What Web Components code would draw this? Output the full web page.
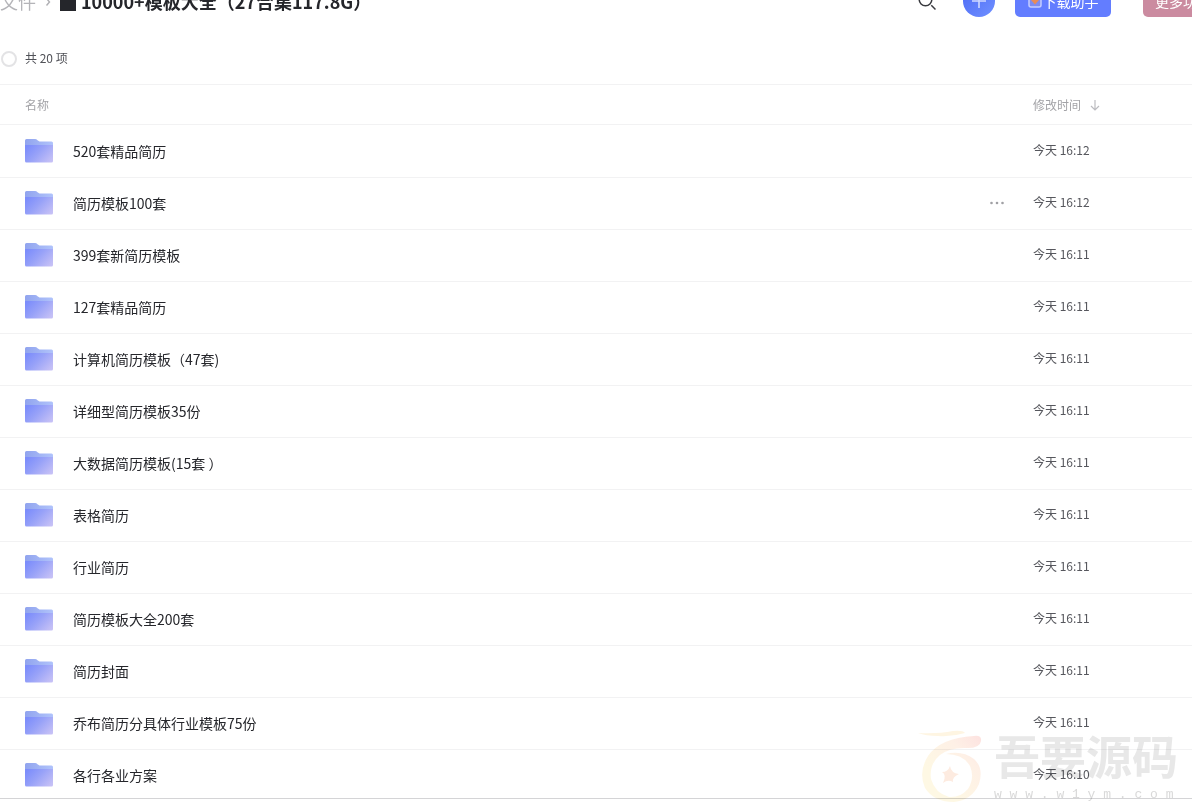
<!DOCTYPE html>
<html lang="zh-CN">
<head>
<meta charset="utf-8">
<title>文件</title>
<style>
  body {
    margin: 0;
    font-family: "Noto Sans CJK SC", sans-serif;
    color: #25262b;
    background: #fff;
  }
</style>
</head>
<body>
<drive-page>
  <drive-header slot="header">10000+模板大全（27合集117.8G）</drive-header>
  <select-bar slot="bar">共 20 项</select-bar>
  <file-table></file-table>
  <water-mark slot="mark"></water-mark>
</drive-page>

<script>
const files = [
  ['520套精品简历', '16:12'],
  ['简历模板100套', '16:12', true],
  ['399套新简历模板', '16:11'],
  ['127套精品简历', '16:11'],
  ['计算机简历模板（47套)', '16:11'],
  ['详细型简历模板35份', '16:11'],
  ['大数据简历模板(15套 ）', '16:11'],
  ['表格简历', '16:11'],
  ['行业简历', '16:11'],
  ['简历模板大全200套', '16:11'],
  ['简历封面', '16:11'],
  ['乔布简历分具体行业模板75份', '16:11'],
  ['各行各业方案', '16:10']
];

class DrivePage extends HTMLElement {
  constructor() {
    super();
    this.attachShadow({mode: 'open'}).innerHTML = `
      <style>
        :host {
          display: flex;
          flex-direction: column;
          height: 100vh;
          overflow: hidden;
          position: relative;
        }
        main {
          flex: 1;
          min-height: 0;
          overflow: hidden;
          border-top: 1px solid #f2f2f3;
          border-bottom: 1px solid #d4d4d6;
          margin-bottom: 11px;
        }
      </style>
      <slot name="header"></slot>
      <slot name="bar"></slot>
      <main><slot></slot></main>
      <slot name="mark"></slot>
    `;
  }
}

// Top bar, scrolled halfway out of the window
class DriveHeader extends HTMLElement {
  constructor() {
    super();
    this.attachShadow({mode: 'open'}).innerHTML = `
      <style>
        :host {
          display: flex;
          align-items: center;
          justify-content: space-between;
          height: 32px;
          margin-top: -15px;
          margin-right: -47px;
        }
        nav, .tools {
          display: flex;
          align-items: center;
          flex: none;
        }
        nav {
          font-size: 18px;
          line-height: 32px;
        }
        a {
          color: #b4b4b8;
          text-decoration: none;
        }
        nav svg { margin: 0 8px; }
        .block {
          width: 16px;
          height: 20px;
          background: #25262b;
          margin-right: 5px;
        }
        h1 {
          margin: 0;
          font-size: 18px;
          font-weight: 700;
        }
        button {
          border: 0;
          padding: 0;
          background: none;
          font: inherit;
          display: flex;
          align-items: center;
          justify-content: center;
        }
        .add {
          width: 32px;
          height: 32px;
          border-radius: 50%;
          background: linear-gradient(135deg, #4b69f5, #7090ff);
          margin: 0 20px 0 26px;
        }
        .main, .more {
          width: 96px;
          height: 32px;
          border-radius: 5px;
          color: #fff;
          font-size: 14px;
        }
        .main {
          background: #637dff;
          margin-right: 32px;
        }
        .main svg { margin-right: 1px; }
        .more {
          background: #cb8ba0;
          justify-content: flex-start;
          padding-left: 12px;
        }
      </style>
      <nav>
        <a href="#">文件</a>
        <svg width="8" height="10" viewBox="0 0 8 10" fill="none" stroke="#b0b0b4" stroke-width="1.4"><path d="M2.500 2.500l3 3.500-3 3.500"/></svg>
        <span class="block"></span>
        <h1><slot></slot></h1>
      </nav>
      <div class="tools">
        <button aria-label="搜索">
          <svg width="20" height="20" viewBox="0 0 20 20" fill="none" stroke="#38393e" stroke-width="1.5"><circle cx="8.500" cy="8.500" r="6.300"/><path d="M14.300 14.300l4.200 4.200"/></svg>
        </button>
        <button class="add" aria-label="新建">
          <svg width="16" height="16" viewBox="0 0 16 16" stroke="#cfd9ff" stroke-width="1.600"><path d="M8 1v14M1 8h14"/></svg>
        </button>
        <button class="main">
          <svg width="14" height="14" viewBox="0 0 14 14"><rect x="1" y="1" width="12" height="12" rx="2" fill="#7d8cf0" stroke="#c5cdff" stroke-width="1.500"/><path d="M5.500 2.500h3V6H11l-4 4.500L3 6h2.500z" fill="#e98b55"/></svg>
          下载助手
        </button>
        <button class="more">更多功能</button>
      </div>
    `;
  }
}

class SelectBar extends HTMLElement {
  constructor() {
    super();
    this.attachShadow({mode: 'open'}).innerHTML = `
      <style>
        :host { display: block; padding: 32px 0 15px 1px; }
        label {
          display: flex;
          align-items: center;
          gap: 8px;
          height: 20px;
          font-size: 12px;
          color: #505157;
        }
        input {
          appearance: none;
          box-sizing: border-box;
          width: 16px;
          height: 16px;
          margin: 0;
          border: 2px solid #e3e3e5;
          border-radius: 50%;
        }
        span { padding-bottom: 4px; }
      </style>
      <label><input type="checkbox"><span><slot></slot></span></label>
    `;
  }
}

class FolderIcon extends HTMLElement {
  constructor() {
    super();
    this.attachShadow({mode: 'open'}).innerHTML = `
      <style>
        :host { display: block; width: 28px; height: 24px; }
        svg { display: block; }
      </style>
      <svg width="28" height="24" viewBox="0 0 28 24">
        <defs>
          <linearGradient id="front" x1="0" y1="0.200" x2="1" y2="0.800">
            <stop offset="0" stop-color="#7c8dfb"/>
            <stop offset="0.450" stop-color="#98a2f8"/>
            <stop offset="1" stop-color="#c5c0f6"/>
          </linearGradient>
          <linearGradient id="back" x1="0" y1="0" x2="1" y2="0">
            <stop offset="0" stop-color="#91a4ee"/>
            <stop offset="1" stop-color="#b0c3fb"/>
          </linearGradient>
        </defs>
        <path d="M0 1.500Q0 0 1.500 0H10Q11.500 0 12.500 1.200L14.500 2.500H26.500Q28 2.500 28 4V12H0z" fill="url(#back)"/>
        <path d="M0 6H28V22Q28 23.500 26.500 23.500H1.500Q0 23.500 0 22z" fill="url(#front)"/>
      </svg>
    `;
  }
}

class FileTable extends HTMLElement {
  constructor() {
    super();
    const styles = `
      :host { display: block; }
      table {
        width: 100%;
        table-layout: fixed;
        border-collapse: separate;
        border-spacing: 0;
      }
      th, td {
        box-sizing: border-box;
        padding: 0;
        text-align: left;
        font-weight: 400;
        border-bottom: 1px solid #f2f2f3;
      }
      th {
        height: 40px;
        font-size: 12px;
        color: #a3a3a7;
      }
      th:first-child, td:first-child { padding-left: 25px; }
      td {
        height: 52px;
        padding-bottom: 2px;
      }
      tbody tr:first-child td {
        height: 53px;
        padding-top: 1px;
      }
      .actions { width: 44px; }
      .time { width: 159px; }
      td.time {
        font-size: 12px;
        color: #56575d;
        padding-bottom: 4px;
      }
      .name {
        display: flex;
        align-items: center;
        gap: 20px;
      }
      .name a {
        font-size: 14px;
        line-height: 20px;
        color: #25262b;
        text-decoration: none;
      }
      button {
        display: flex;
        align-items: center;
        gap: 8px;
        padding: 0;
        border: 0;
        background: none;
        font: inherit;
        color: inherit;
      }
    `;
    const rows = files.map(([name, time, more]) => `
      <tr>
        <td><div class="name"><folder-icon></folder-icon><a href="#">${name}</a></div></td>
        <td class="actions">${more ? `<button aria-label="更多"><svg width="16" height="4" viewBox="0 0 16 4" fill="#a0a0a4"><circle cx="2.500" cy="2" r="1.300"/><circle cx="8" cy="2" r="1.300"/><circle cx="13.500" cy="2" r="1.300"/></svg></button>` : ''}</td>
        <td class="time">今天 ${time}</td>
      </tr>`).join('');

    this.attachShadow({mode: 'open'}).innerHTML = `
      <style>${styles}</style>
      <table>
        <thead>
          <tr>
            <th>名称</th>
            <th class="actions"></th>
            <th class="time"><button>修改时间
              <svg width="12" height="12" viewBox="0 0 12 12" fill="none" stroke="#bcbcc0" stroke-width="1.200"><path d="M6 1v10M2 7l4 4 4-4"/></svg>
            </button></th>
          </tr>
        </thead>
        <tbody>${rows}</tbody>
      </table>
    `;
  }
}

// Faint site mark that lies over the last rows
class WaterMark extends HTMLElement {
  constructor() {
    super();
    this.attachShadow({mode: 'open'}).innerHTML = `
      <style>
        :host {
          position: absolute;
          right: 14px;
          bottom: 6px;
          display: flex;
          align-items: flex-end;
          gap: 10px;
          pointer-events: none;
          mix-blend-mode: multiply;
          color: #e8e8e8;
        }
        .big {
          font-size: 46px;
          line-height: 56px;
          font-weight: 700;
          margin-bottom: 4px;
        }
        .site {
          font: 13px/18px "Liberation Mono", monospace;
          color: #d9d9d9;
          white-space: nowrap;
        }
      </style>
      <svg width="66" height="74" viewBox="0 0 66 74">
        <defs>
          <linearGradient id="ring" x1="1" y1="0" x2="0.300" y2="0.700">
            <stop offset="0" stop-color="#fde2e0"/>
            <stop offset="0.400" stop-color="#fef0e6"/>
            <stop offset="1" stop-color="#fef8e4"/>
          </linearGradient>
        </defs>
        <path d="M0 3Q20 4 35 1Q45 0 47 3Q34 7 20 6Q8 6 0 3z" fill="#fef5e2"/>
        <path d="M63 11Q64 5 56 6Q22 8 10 26Q0 42 7 58Q16 72 36 72Q54 70 61 54Q66 38 56 29Q44 20 28 24Q45 24 52 36Q57 48 50 59Q42 68 31 67Q17 63 13 49Q11 34 22 25Q31 18 46 18Q62 19 63 11z" fill="url(#ring)"/>
        <path d="M32 36Q33 43 41 44Q34 47 35 52Q30 49 25 53Q29 45 24 42Q30 42 32 36z" fill="#fdebe0"/>
      </svg>
      <div>
        <div class="big">吾要源码</div>
        <div class="site">w w w . w 1 y m . c o m</div>
      </div>
    `;
  }
}

customElements.define('drive-page', DrivePage);
customElements.define('drive-header', DriveHeader);
customElements.define('select-bar', SelectBar);
customElements.define('folder-icon', FolderIcon);
customElements.define('file-table', FileTable);
customElements.define('water-mark', WaterMark);
</script>
</body>
</html>
